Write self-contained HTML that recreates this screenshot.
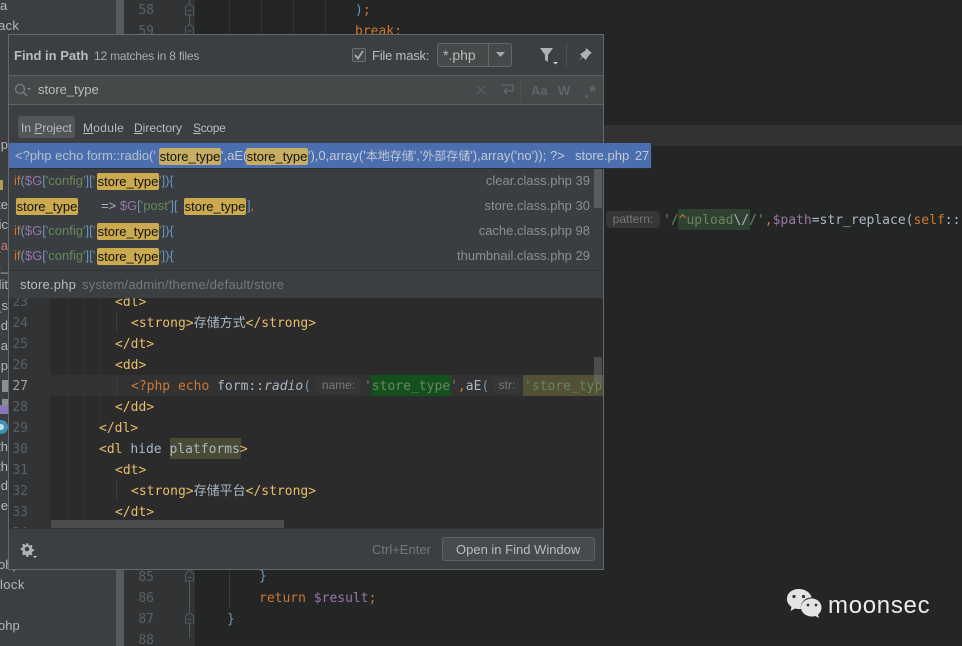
<!DOCTYPE html>
<html><head><meta charset="utf-8"><style>
html,body{margin:0;padding:0}
#r{position:relative;width:962px;height:646px;overflow:hidden;background:#242626;font-family:"Liberation Sans","Noto Sans CJK SC",sans-serif;font-size:13px;color:#bbb}
#r div,#r span.a,#r svg{position:absolute}
.t{white-space:pre;line-height:18px;height:18px}
.m{font-family:"DejaVu Sans Mono","Noto Sans CJK SC",monospace;font-size:13px;white-space:pre;line-height:21px;height:21px;margin-top:1px}
.n{font-family:"DejaVu Sans Mono",monospace;font-size:13px;line-height:21px;color:#5d6062;text-align:right;width:30px;margin-top:1px}
.g{color:#e8bf6a}.w{color:#a9b7c6}.k{color:#cc7832}.s{color:#6a8759}.v{color:#9876aa}.b{color:#6897bb}
.ch{background:#cba94e;border-radius:2px;color:#111;height:17px;line-height:17px;width:62px;text-align:center;white-space:pre}
.sd{left:-20px;width:28px;text-align:right;color:#b4b8ba;white-space:pre;line-height:18px}
.sd2{left:0;color:#b4b8ba;white-space:pre;line-height:18px}
.hint{background:#363636;border-radius:4px;color:#787878;font-size:12px;line-height:17px;height:17px;text-align:center}
.rf{right:372px;color:#8c8f91;white-space:pre;line-height:18px}
u{text-decoration:underline}
</style></head><body><div id="r">
<!-- sidebar -->
<div style="left:0;top:0;width:116px;height:646px;background:#3c3f41"></div>
<div style="left:116px;top:0;width:8px;height:646px;background:#57595b"></div>
<div style="left:124px;top:0;width:71px;height:646px;background:#313335"></div>
<div style="left:604px;top:125px;width:358px;height:21px;background:#323232"></div>
<div class="sd2" style="top:-3px">a</div><div class="sd2" style="left:-2px;top:17px;letter-spacing:.3px">ack</div>
<div class="sd" style="top:136px">p</div>
<div style="left:0;top:180px;width:3px;height:10px;background:#b59a55"></div>
<div class="sd" style="top:196px">ote</div>
<div class="sd" style="top:216px">ic</div><div class="sd" style="top:237px;color:#c77">_a</div>
<div class="sd" style="top:258px">s_</div><div class="sd" style="top:276px">dit</div>
<div class="sd" style="top:297px">_s</div><div class="sd" style="top:317px">d</div>
<div class="sd" style="top:337px">la</div><div class="sd" style="top:357px">p</div>
<div style="left:2px;top:380px;width:6px;height:12px;background:#8d9092"></div>
<div style="left:2px;top:399px;width:6px;height:6px;background:#8d9092"></div>
<div style="left:0;top:405px;width:8px;height:9px;background:#8a76b8"></div>
<div style="left:-6px;top:420px;width:14px;height:14px;border-radius:7px;background:#3f92b5"></div>
<div style="left:-2px;top:424px;width:6px;height:6px;border-radius:3px;background:#c4dbe4"></div>
<div class="sd" style="top:438px">th</div><div class="sd" style="top:458px">th</div>
<div class="sd" style="top:477px">ed</div><div class="sd" style="top:497px">ue</div>
<div class="sd2" style="left:-2px;top:556px">ohp</div>
<div class="sd2" style="left:0;top:576px;letter-spacing:.4px">lock</div>
<div class="sd2" style="left:-2px;top:617px">ohp</div>
<!-- outer gutter -->
<div class="n" style="left:124px;top:-1px">58</div><div class="n" style="left:124px;top:20px">59</div>
<div class="n" style="left:124px;top:566px">85</div><div class="n" style="left:124px;top:587px">86</div>
<div class="n" style="left:124px;top:608px">87</div><div class="n" style="left:124px;top:629px">88</div>
<svg style="left:184px;top:0;width:11px;height:646px" viewBox="0 0 11 646"><g fill="none" stroke="#55585a"><path d="M5.500 0V36M5.500 570V638"/><path fill="#313335" d="M1.500 7L5.500 4L9.500 7V15H1.500ZM1.500 27.500L5.500 24.500L9.500 27.500V35H1.500ZM1.500 574L5.500 570L9.500 574V581H1.500ZM1.500 616L5.500 613L9.500 616V623H1.500Z"/><path d="M3.500 10.500H7.500M3.500 31H7.500M3.500 577.500H7.500M3.500 619.500H7.500"/></g></svg>
<div style="left:229px;top:570px;width:1px;height:38px;background:#3a3c3c"></div>
<div style="left:229px;top:0;width:1px;height:36px;background:#333"></div><div style="left:261px;top:0;width:1px;height:36px;background:#333"></div><div style="left:293px;top:0;width:1px;height:36px;background:#333"></div><div style="left:325px;top:0;width:1px;height:36px;background:#333"></div>
<div class="m" style="left:355px;top:-1px"><span class="b">)</span><span class="k">;</span></div>
<div class="m k" style="left:355px;top:20px">break;</div>
<div class="m b" style="left:259px;top:565px">}</div>
<div class="m" style="left:259px;top:587px"><span class="k">return</span> <span class="v">$result</span><span class="k">;</span></div>
<div class="m b" style="left:227px;top:608px">}</div>
<!-- pattern line -->
<div class="hint" style="left:606px;top:211px;width:54px">pattern:</div>
<div style="left:678px;top:209px;width:72px;height:21px;background:#2f4232"></div>
<div class="m" style="left:663px;top:209px"><span class="s">'/</span><span class="k">^</span><span class="s">upload</span><span class="w">\/</span><span class="s">/'</span><span class="k">,</span><span class="v">$path</span><span class="w">=str_replace(</span><span class="k">self</span><span class="w">::</span></div>
<!-- logo -->
<svg style="left:786px;top:588px;width:36px;height:30px" viewBox="0 0 36 30"><path fill="#e4e4e4" d="M13 1C6 1 1 5 1 11c0 3.500 2 6 4.500 8L4.500 23l4.500-2.500c1.500.4 2.800.6 4 .6 1 0 1.500-.1 2-.2C14 15 19 9.500 25 9.500h.7C24.500 4.500 19 1 13 1z"/><path fill="#e4e4e4" d="M26 10.500c-6 0-11 4-11 9s5 9 11 9c1 0 2.300-.2 3.300-.5l3.700 2-1-3.300c2-1.800 3.500-4 3.500-7.200 0-5-4.500-9-9.500-9z"/><g fill="#333"><circle cx="8" cy="8.500" r="1.600"/><circle cx="17.500" cy="8.500" r="1.600"/><circle cx="22" cy="17" r="1.400"/><circle cx="30" cy="17" r="1.400"/></g></svg>
<div class="t" style="left:828px;top:593px;font-size:24px;line-height:26px;height:26px;color:#ececec;letter-spacing:.7px">moonsec</div>

<!-- dialog -->
<div style="left:8px;top:34px;width:596px;height:536px;background:#3c3f41;box-sizing:border-box;border:1px solid #66696b"></div>
<div class="t" style="left:14px;top:47px;font-weight:bold;color:#bbb">Find in Path</div>
<div class="t" style="left:94px;top:47px;font-size:12px;color:#aaa;letter-spacing:-.2px">12 matches in 8 files</div>
<div style="left:352px;top:48px;width:12px;height:12px;border:1px solid #6b6e70;border-radius:2px;background:#43494a"></div>
<svg style="left:352px;top:48px;width:14px;height:14px" viewBox="0 0 14 14"><path d="M3 7l3 3.500L11 3" fill="none" stroke="#a8abad" stroke-width="1.800"/></svg>
<div class="t" style="left:372px;top:47px;letter-spacing:-.2px">File mask:</div>
<div style="left:437px;top:43px;width:73px;height:22px;border:1px solid #646769;border-radius:3px;background:#45494a"></div>
<div style="left:488px;top:44px;width:1px;height:22px;background:#646769"></div>
<div class="t" style="left:443px;top:46px;font-size:14px">*.php</div>
<svg style="left:495px;top:51px;width:11px;height:7px" viewBox="0 0 11 7"><path d="M1 1h9L5.500 6z" fill="#a8abad"/></svg>
<svg style="left:538px;top:47px;width:20px;height:18px" viewBox="0 0 20 18"><path d="M2 1h13L10 8v7L7 13V8z" fill="#afb1b3"/><path d="M15 15h5l-2.500 2.500z" fill="#cfd1d3"/></svg>
<div style="left:566px;top:43px;width:1px;height:24px;background:#4f5254"></div>
<svg style="left:577px;top:47px;width:16px;height:16px" viewBox="0 0 16 16"><path d="M9 1l6 5-2 1-3 4-1 2-3.500-3L1 15l4-5.500L3 7l2-1 3.500-2.500z" fill="#afb1b3"/></svg>
<div style="left:9px;top:75px;width:594px;height:1px;background:#5f6264"></div>
<div style="left:9px;top:76px;width:594px;height:28px;background:#45494a"></div>
<div style="left:9px;top:104px;width:594px;height:1px;background:#5f6264"></div>
<svg style="left:14px;top:83px;width:18px;height:14px" viewBox="0 0 18 14"><circle cx="6" cy="6" r="4.500" fill="none" stroke="#7c7f81" stroke-width="1.200"/><path d="M9.500 9.500L13 13" stroke="#7c7f81" stroke-width="1.300"/><path d="M13 5h4l-2 2.500z" fill="#7c7f81"/></svg>
<div class="t" style="left:38px;top:81px">store_type</div>
<svg style="left:476px;top:85px;width:10px;height:10px" viewBox="0 0 10 10"><path d="M1 1l8 8M9 1l-8 8" stroke="#5f6264" stroke-width="1.100"/></svg>
<svg style="left:500px;top:83px;width:15px;height:14px" viewBox="0 0 15 14"><path d="M1 2h12v6H5M7 5L4 8l3 3" fill="none" stroke="#65686a" stroke-width="1.300"/></svg>
<div style="left:520px;top:78px;width:1px;height:24px;background:#4f5254"></div>
<div class="t" style="left:531px;top:82px;font-weight:bold;color:#626567;font-size:13px">Aa</div>
<div class="t" style="left:558px;top:82px;font-weight:bold;color:#626567;font-size:13px">W</div>
<div class="t" style="left:584px;top:83px;font-weight:bold;color:#626567;font-size:18px">.*</div>
<!-- tabs -->
<div style="left:18px;top:116px;width:57px;height:22px;background:#515658;border-radius:3px"></div>
<div class="t" style="left:21px;top:119px;font-size:12px">In <u>P</u>roject</div>
<div class="t" style="left:83px;top:119px;font-size:12px;letter-spacing:.3px"><u>M</u>odule</div>
<div class="t" style="left:134px;top:119px;font-size:12px"><u>D</u>irectory</div>
<div class="t" style="left:193px;top:119px;font-size:12px;letter-spacing:-.3px"><u>S</u>cope</div>
<!-- results -->
<div style="left:9px;top:168px;width:594px;height:102px;background:#3a3d41"></div>
<div style="left:594px;top:168px;width:8px;height:40px;background:#595b5d"></div>
<div style="left:9px;top:143px;width:642px;height:25px;background:#4b6eaf;box-shadow:1px 1px 0 #2b2d2e"></div>
<div class="t" style="left:15px;top:147px;color:#b8c0cc">&lt;?php echo form::radio('</div>
<div class="ch" style="left:159px;top:148px;background:#c8ae63">store_type</div>
<div class="t" style="left:221px;top:147px;color:#c2c9d4">',aE('</div>
<div class="ch" style="left:246px;top:148px;background:#c8ae63">store_type</div>
<div class="t" style="left:308px;top:147px;color:#c2c9d4">'),0,array('<span style="font-size:12px">本地存储</span>','<span style="font-size:12px">外部存储</span>'),array('no')); ?&gt;</div>
<div class="t" style="left:575px;top:147px;color:#c2c9d4;word-spacing:2px">store.php 27</div>

<div class="t" style="left:14px;top:172px"><span class="k">if</span><span class="b">(</span><span class="v">$G</span><span class="b">[</span><span class="s">'config'</span><span class="b">][</span><span class="s">'</span></div>
<div class="ch" style="left:97px;top:173px">store_type</div><div class="t" style="left:159px;top:172px"><span class="s">'</span><span class="b">]){</span></div>
<div class="ch" style="left:16px;top:198px">store_type</div>
<div class="t" style="left:101px;top:197px"><span style="color:#a9b7c6">=&gt;</span> <span class="v">$G</span><span class="b">[</span><span class="s">'post'</span><span class="b">][</span></div>
<div class="ch" style="left:184px;top:198px">store_type</div><div class="t b" style="left:247px;top:197px">]<span class="k">,</span></div>
<div class="t" style="left:14px;top:222px"><span class="k">if</span><span class="b">(</span><span class="v">$G</span><span class="b">[</span><span class="s">'config'</span><span class="b">][</span><span class="s">'</span></div>
<div class="ch" style="left:97px;top:223px">store_type</div><div class="t" style="left:159px;top:222px"><span class="s">'</span><span class="b">]){</span></div>
<div class="t" style="left:14px;top:247px"><span class="k">if</span><span class="b">(</span><span class="v">$G</span><span class="b">[</span><span class="s">'config'</span><span class="b">][</span><span class="s">'</span></div>
<div class="ch" style="left:97px;top:248px">store_type</div><div class="t" style="left:159px;top:247px"><span class="s">'</span><span class="b">]){</span></div>
<div class="rf" style="top:172px">clear.class.php 39</div>
<div class="rf" style="top:197px">store.class.php 30</div>
<div class="rf" style="top:222px">cache.class.php 98</div>
<div class="rf" style="top:247px">thumbnail.class.php 29</div>
<div style="left:9px;top:270px;width:594px;height:1px;background:#2f3133"></div>
<div class="t" style="left:20px;top:276px;letter-spacing:.2px">store.php</div>
<div class="t" style="left:82px;top:276px;color:#787878;letter-spacing:.22px">system/admin/theme/default/store</div>
<!-- preview -->
<div style="left:9px;top:298px;width:594px;height:231px;background:#2b2b2b;overflow:hidden">
 <div style="left:0;top:0;width:41px;height:231px;background:#313335"></div>
 <div style="left:41px;top:77px;width:553px;height:21px;background:#323232"></div>
 <div style="left:59px;top:0;width:1px;height:231px;background:#353535"></div>
 <div style="left:75px;top:0;width:1px;height:231px;background:#353535"></div>
 <div style="left:91px;top:0;width:1px;height:129px;background:#353535"></div>
 <div style="left:107px;top:14px;width:1px;height:21px;background:#3d3d3d"></div>
 <div style="left:107px;top:77px;width:1px;height:21px;background:#3d3d3d"></div>
 <div style="left:107px;top:182px;width:1px;height:21px;background:#3d3d3d"></div>
 <div class="n" style="left:-11px;top:-7px">23</div><div class="n" style="left:-11px;top:14px">24</div><div class="n" style="left:-11px;top:35px">25</div><div class="n" style="left:-11px;top:56px">26</div>
 <div class="n" style="left:-11px;top:77px;color:#a4a3a3">27</div><div class="n" style="left:-11px;top:98px">28</div><div class="n" style="left:-11px;top:119px">29</div><div class="n" style="left:-11px;top:140px">30</div><div class="n" style="left:-11px;top:161px">31</div><div class="n" style="left:-11px;top:182px">32</div><div class="n" style="left:-11px;top:203px">33</div><div class="n" style="left:-11px;top:224px">34</div>
 <div class="m g" style="left:106px;top:-7px">&lt;dl&gt;</div>
 <div class="m g" style="left:122px;top:14px">&lt;strong&gt;<span class="w">存储方式</span>&lt;/strong&gt;</div>
 <div class="m g" style="left:106px;top:35px">&lt;/dt&gt;</div>
 <div class="m g" style="left:106px;top:56px">&lt;dd&gt;</div>
 <div class="m" style="left:122px;top:77px"><span class="k">&lt;?php echo</span> <span class="w">form::<i>radio</i></span><span class="b">(</span></div>
 <div class="hint" style="left:307px;top:79px;width:45px">name:</div>
 <div style="left:362px;top:77px;width:80px;height:21px;background:#14501f"></div>
 <div class="m" style="left:355px;top:77px"><span class="s">'store_type'</span><span class="k">,</span><span class="w">aE</span><span class="b">(</span></div>
 <div class="hint" style="left:484px;top:79px;width:28px">str:</div>
 <div style="left:514px;top:77px;width:80px;height:21px;background:#525036"></div>
 <div class="m s" style="left:515px;top:77px;width:79px;overflow:hidden">'store_typ</div>
 <div class="m g" style="left:106px;top:98px">&lt;/dd&gt;</div>
 <div class="m g" style="left:90px;top:119px">&lt;/dl&gt;</div>
 <div style="left:161px;top:140px;width:71px;height:21px;background:#4b4a35"></div>
 <div class="m g" style="left:90px;top:140px">&lt;dl <span class="w">hide platforms</span>&gt;</div>
 <div class="m g" style="left:106px;top:161px">&lt;dt&gt;</div>
 <div class="m g" style="left:122px;top:182px">&lt;strong&gt;<span class="w">存储平台</span>&lt;/strong&gt;</div>
 <div class="m g" style="left:106px;top:203px">&lt;/dt&gt;</div>
 <div class="m g" style="left:106px;top:224px">&lt;/dd&gt;</div>
 <div style="left:42px;top:222px;width:233px;height:8px;background:#4c4c4c"></div>
 <div style="left:585px;top:59px;width:8px;height:26px;background:rgba(120,120,120,.45)"></div>
</div>
<!-- footer -->
<div style="left:9px;top:528px;width:594px;height:1px;background:#323436"></div>
<svg style="left:20px;top:542px;width:18px;height:16px" viewBox="0 0 18 16"><path d="M7 1l2 0 .5 2 1.500.7 1.800-1 1.300 1.400-1 1.700.7 1.700 2 .5v2l-2 .5-.7 1.600 1 1.700-1.300 1.400-1.800-1-1.500.7-.5 2H7l-.5-2-1.500-.7-1.800 1L1.900 12.500l1-1.700L2.200 9.200l-2-.5v-2l2-.5.7-1.700-1-1.700 1.300-1.400 1.800 1L6.500 3z" fill="#afb1b3" transform="scale(.86) translate(.5 .5)"/><circle cx="7" cy="7" r="2.300" fill="#3c3f41"/><path d="M13 14h4l-2 2z" fill="#cfd1d3"/></svg>
<div class="t" style="left:372px;top:541px;color:#777">Ctrl+Enter</div>
<div style="left:442px;top:537px;width:151px;height:22px;background:#484b4d;border:1px solid #5e6163;border-radius:3px"></div>
<div class="t" style="left:456px;top:541px;color:#bbb">Open in Find Window</div>
</div></body></html>
